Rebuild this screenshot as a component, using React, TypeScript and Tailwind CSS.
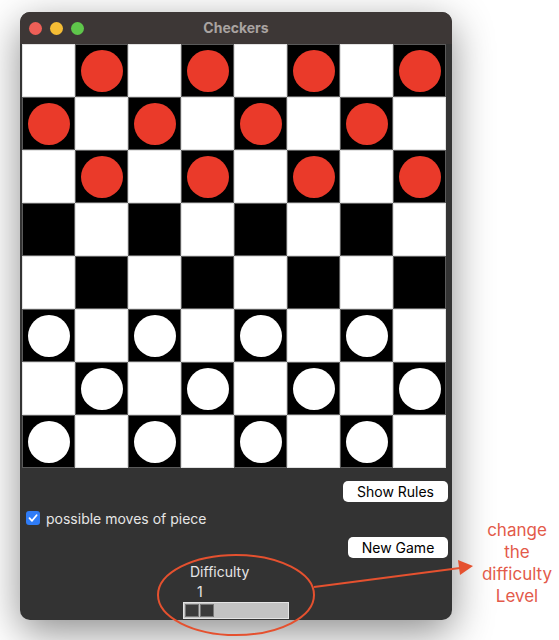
import React from "react";

const RED = "bg-[#ea3a2a]";

function Cell({ r, c }: { r: number; c: number }) {
  const dark = (r + c) % 2 === 1;
  let piece: null | "red" | "white" = null;
  if (dark && r <= 2) piece = "red";
  if (dark && r >= 5) piece = "white";
  return (
    <div
      className={
        dark
          ? "w-[53px] h-[53px] bg-black border border-[#5a5a5a] flex items-center justify-center"
          : "w-[53px] h-[53px] bg-white border border-[#e2e2e2] flex items-center justify-center"
      }
    >
      {piece === "red" && <div className={`w-[42px] h-[42px] rounded-full ${RED}`} />}
      {piece === "white" && <div className="w-[42px] h-[42px] rounded-full bg-white" />}
    </div>
  );
}

export default function App() {
  const rows = Array.from({ length: 8 }, (_, i) => i);
  return (
    <div
      className="relative w-[559px] h-[640px] bg-white overflow-hidden"
      style={{ fontFamily: '"Inter", "Liberation Sans", Arial, sans-serif' }}
    >
      <div className="ml-[20px] mt-[12px] w-[432px] h-[608px] rounded-[10px] bg-[#333333] overflow-hidden shadow-[0_12px_40px_rgba(0,0,0,0.45)] flex flex-col">
        {/* title bar */}
        <div className="relative h-[32px] bg-[#3d3736] flex items-center pl-[9px] gap-[8px] shrink-0">
          <div className="w-[13px] h-[13px] rounded-full bg-[#ee5f57]" />
          <div className="w-[13px] h-[13px] rounded-full bg-[#f5bd35]" />
          <div className="w-[13px] h-[13px] rounded-full bg-[#5fc64b]" />
          <div className="absolute inset-0 pb-[2px] flex items-center justify-center text-[14px] font-bold text-[#a9a3a1]">
            Checkers
          </div>
        </div>
        {/* board */}
        <div className="pl-[2px] shrink-0">
          <div className="grid grid-cols-8 w-[424px] h-[424px]">
            {rows.map((r) => rows.map((c) => <Cell key={`${r}-${c}`} r={r} c={c} />))}
          </div>
        </div>
        {/* controls */}
        <div className="flex flex-col flex-1">
          <div className="flex justify-end pr-[4px] mt-[13px]">
            <div className="w-[105px] h-[21px] bg-white rounded-[5px] flex items-center justify-center text-[14px] text-black">
              Show Rules
            </div>
          </div>
          <div className="flex items-center h-[20px] pl-[6px] mt-[6px] gap-[6px]">
            <div className="w-[14px] h-[14px] rounded-[3px] bg-[#2f7cf6] flex items-center justify-center">
              <svg width="10" height="10" viewBox="0 0 10 10">
                <path d="M1.5 5.2 L4 7.8 L8.6 2.2" stroke="white" strokeWidth="1.8" fill="none" strokeLinecap="round" strokeLinejoin="round" />
              </svg>
            </div>
            <span className="text-[14px] text-[#e6e6e6]">possible moves of piece</span>
          </div>
          <div className="flex justify-end pr-[4px] mt-[9px]">
            <div className="w-[100px] h-[21px] bg-white rounded-[5px] flex items-center justify-center text-[14px] text-black">
              New Game
            </div>
          </div>
          <div className="flex flex-col pl-[163px] mt-[5px]">
            <span className="pl-[7px] text-[14px] leading-[18px] text-[#e6e6e6]">Difficulty</span>
            <span className="pl-[14px] text-[14px] leading-[21px] text-[#e6e6e6]">1</span>
            <div className="w-[106px] h-[17px] bg-[#c3c3c3] border border-[#e4e4e4] flex items-center pl-[1px] gap-[1px]">
              <div className="w-[14px] h-[13px] bg-[#3b3b3b] border border-[#777]" />
              <div className="w-[14px] h-[13px] bg-[#3b3b3b] border border-[#777]" />
            </div>
          </div>
        </div>
      </div>

      {/* annotation overlay */}
      <svg className="absolute left-0 top-0 pointer-events-none" width="559" height="640">
        <ellipse cx="236" cy="595" rx="78" ry="40" fill="none" stroke="#e5512f" strokeWidth="2" />
        <line x1="314" y1="587" x2="460" y2="568" stroke="#e5512f" strokeWidth="2" />
        <polygon points="458,560 473,566 460,575" fill="#e5512f" />
      </svg>
      <div className="absolute left-[476px] top-[519px] w-[82px] flex flex-col items-center text-[17px] leading-[22px] text-[#e35a4a]">
        <span>change</span>
        <span>the</span>
        <span>difficulty</span>
        <span>Level</span>
      </div>
    </div>
  );
}
